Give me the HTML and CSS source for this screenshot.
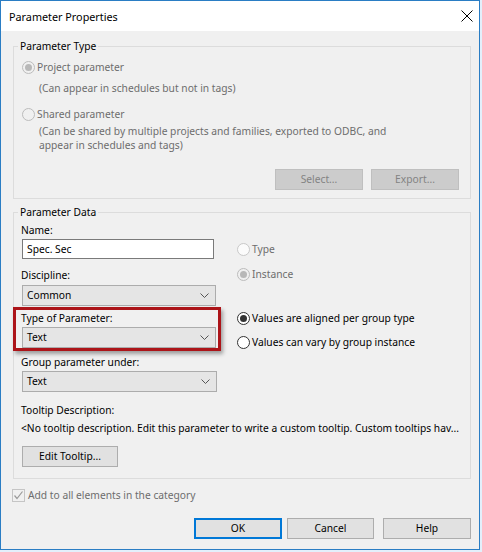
FILE: index.html
```html
<!DOCTYPE html>
<html>
<head>
<meta charset="utf-8">
<link rel="stylesheet" href="styles.css">
</head>
<body>
<div class="window">
  <div class="titlebar">
    <span class="title">Parameter Properties</span>
    <svg class="close" width="12" height="12" viewBox="0 0 12 12"><path d="M0.5 0.5 L11.5 11.5 M11.5 0.5 L0.5 11.5" stroke="#000" stroke-width="1" fill="none"/></svg>
  </div>
  <div class="content">
    <fieldset class="group group-type">
      <legend>Parameter Type</legend>
      <div class="option disabled r1"><span class="radio checked"></span>Project parameter</div>
      <div class="note note1">(Can appear in schedules but not in tags)</div>
      <div class="option disabled r2"><span class="radio"></span>Shared parameter</div>
      <div class="note note2">(Can be shared by multiple projects and families, exported to ODBC, and<br>appear in schedules and tags)</div>
      <div class="btn-row">
        <button class="btn disabled-btn">Select...</button>
        <button class="btn disabled-btn">Export...</button>
      </div>
    </fieldset>

    <fieldset class="group group-data">
      <legend>Parameter Data</legend>
      <div class="data-grid">
        <div class="left-col">
          <div class="label l-name">Name:</div>
          <div class="textbox">Spec. Sec</div>
          <div class="label l-disc">Discipline:</div>
          <div class="combo"><span>Common</span><svg width="9" height="5" viewBox="0 0 9 5"><path d="M0.5 0.5 L4.5 4.5 L8.5 0.5" stroke="#555" fill="none"/></svg></div>
          <div class="label l-type">Type of Parameter:</div>
          <div class="combo"><span>Text</span><svg width="9" height="5" viewBox="0 0 9 5"><path d="M0.5 0.5 L4.5 4.5 L8.5 0.5" stroke="#555" fill="none"/></svg></div>
          <div class="label l-group">Group parameter under:</div>
          <div class="combo combo-wide"><span>Text</span><svg width="9" height="5" viewBox="0 0 9 5"><path d="M0.5 0.5 L4.5 4.5 L8.5 0.5" stroke="#555" fill="none"/></svg></div>
          <div class="highlight"></div>
        </div>
        <div class="right-col">
          <div class="option disabled o-type"><span class="radio light"></span>Type</div>
          <div class="option disabled o-inst"><span class="radio checked"></span>Instance</div>
          <div class="option o-aligned"><span class="radio on"></span>Values are aligned per group type</div>
          <div class="option o-vary"><span class="radio enabled"></span>Values can vary by group instance</div>
        </div>
      </div>
      <div class="label l-tip">Tooltip Description:</div>
      <div class="tip-text">&lt;No tooltip description. Edit this parameter to write a custom tooltip. Custom tooltips hav...</div>
      <button class="btn btn-tip">Edit Tooltip...</button>
    </fieldset>

    <div class="check-row">
      <span class="checkbox"><svg width="11" height="11" viewBox="0 0 11 11"><path d="M1.5 5.5 L4 8.5 L9.5 1.5" stroke="#9a9a9a" stroke-width="1.2" fill="none"/></svg></span>
      <span class="check-text">Add to all elements in the category</span>
    </div>

    <div class="footer">
      <button class="btn btn-ok">OK</button>
      <button class="btn btn-cancel">Cancel</button>
      <button class="btn btn-help">Help</button>
    </div>
  </div>
</div>
</body>
</html>
```

FILE: styles.css
```css
* { box-sizing: border-box; }
html, body { margin: 0; padding: 0; }
body {
  background: #e3f0fb;
  font-family: "Noto Sans", "Open Sans", sans-serif;
  font-size: 10.25px;
  color: #000;
  width: 482px;
  height: 552px;
  overflow: hidden;
}
.window {
  width: 480px;
  height: 550px;
  border: 1px solid #2a7dc4;
  background: #f0f0f0;
  display: flex;
  flex-direction: column;
}
.titlebar {
  height: 30px;
  flex: none;
  background: #fff;
  display: flex;
  align-items: center;
  justify-content: space-between;
  padding: 0 6px 0 8px;
}
.title { font-size: 10.8px; line-height: 16px; margin-top: 1px; }
.close { display: block; }

.content {
  padding: 7px 8px 0 12px;
  display: flex;
  flex-direction: column;
}
.group {
  margin: 0;
  border: 1px solid #dcdcdc;
  padding: 0 11px 8px 8px;
  min-width: 0;
}
.group legend {
  padding: 0 2px;
  margin-left: -4px;
  line-height: 16px;
}
.option {
  display: flex;
  align-items: center;
  line-height: 16px;
  height: 16px;
}
.option.disabled { color: #6d6d6d; }
.radio {
  width: 13px;
  height: 13px;
  border-radius: 50%;
  border: 1px solid #bcbcbc;
  background: #f0f0f0;
  margin-right: 2px;
  flex: none;
  display: flex;
  align-items: center;
  justify-content: center;
}
.radio.light { background: #fbfbfb; border-color: #c8c8c8; }
.radio.checked::after {
  content: "";
  width: 7px;
  height: 7px;
  border-radius: 50%;
  background: #b8b8b8;
}
.radio.enabled { border-color: #333; background: #fff; }
.radio.on { border-color: #333; background: #fff; }
.radio.on::after {
  content: "";
  width: 7px;
  height: 7px;
  border-radius: 50%;
  background: #333;
}
.r1 { margin-top: 5px; }
.note { color: #6d6d6d; margin-left: 17px; }
.note1 { margin-top: 5px; line-height: 16px; }
.r2 { margin-top: 10px; }
.note2 { margin-top: 2px; line-height: 14px; }
.btn-row {
  margin-top: 17px;
  display: flex;
  justify-content: flex-end;
  gap: 8px;
}
.btn {
  font: inherit;
  width: 88px;
  height: 21px;
  padding: 0;
  margin: 0;
  border: 1px solid #adadad;
  background: #e1e1e1;
  color: #000;
  line-height: 17px;
}
.disabled-btn {
  background: #cccccc;
  border-color: #bfbfbf;
  color: #838383;
}

.group-data { margin-top: 5px; padding-bottom: 11px; }
.data-grid {
  display: grid;
  grid-template-columns: 195px 1fr;
  column-gap: 20px;
}
.left-col { position: relative; display: flex; flex-direction: column; align-items: flex-start; }
.label { line-height: 16px; height: 16px; margin-left: -1px; }
.l-name { margin-top: 2px; }
.textbox {
  margin-top: 1px;
  width: 192px;
  height: 20px;
  background: #fff;
  border: 1px solid #7a7a7a;
  padding-left: 4px;
  line-height: 18px;
}
.l-disc { margin-top: 8px; }
.combo {
  margin-top: 2px;
  width: 194px;
  height: 21px;
  background: #e5e5e5;
  border: 1px solid #acacac;
  padding: 0 6px 0 4px;
  display: flex;
  align-items: center;
  justify-content: space-between;
  line-height: 19px;
}
.combo-wide { width: 195px; }
.l-type { margin-top: 4px; }
.l-type + .combo { margin-top: 1px; }
.l-group { margin-top: 6px; }
.l-group + .combo { margin-top: 1px; }
.highlight {
  position: absolute;
  left: -9px;
  top: 87px;
  width: 208px;
  height: 44px;
  border: 3px solid #ac1419;
  box-shadow: 2px 3px 4px rgba(0, 0, 0, 0.35);
  pointer-events: none;
}
.right-col { display: flex; flex-direction: column; padding-top: 21px; }
.o-inst { margin-top: 9px; }
.o-aligned { margin-top: 28px; }
.o-vary { margin-top: 8px; }

.l-tip { margin-top: 10px; }
.tip-text { margin-top: 2px; line-height: 16px; margin-left: -1px; white-space: nowrap; }
.btn-tip { margin-top: 10px; width: 96px; }

.check-row {
  margin-top: 8px;
  display: flex;
  align-items: center;
  height: 16px;
  margin-left: -1px;
}
.checkbox {
  width: 13px;
  height: 13px;
  border: 1px solid #c5c5c5;
  background: #f0f0f0;
  display: flex;
  align-items: center;
  justify-content: center;
  margin-right: 3px;
}
.checkbox svg { display: block; }
.check-text { color: #6d6d6d; line-height: 16px; }

.footer {
  margin-top: 15px;
  display: flex;
  justify-content: flex-end;
}
.btn-ok { border: 2px solid #0078d7; line-height: 17px; }
.btn-cancel { margin-left: 5px; width: 87px; }
.btn-help { margin-left: 9px; }
```
